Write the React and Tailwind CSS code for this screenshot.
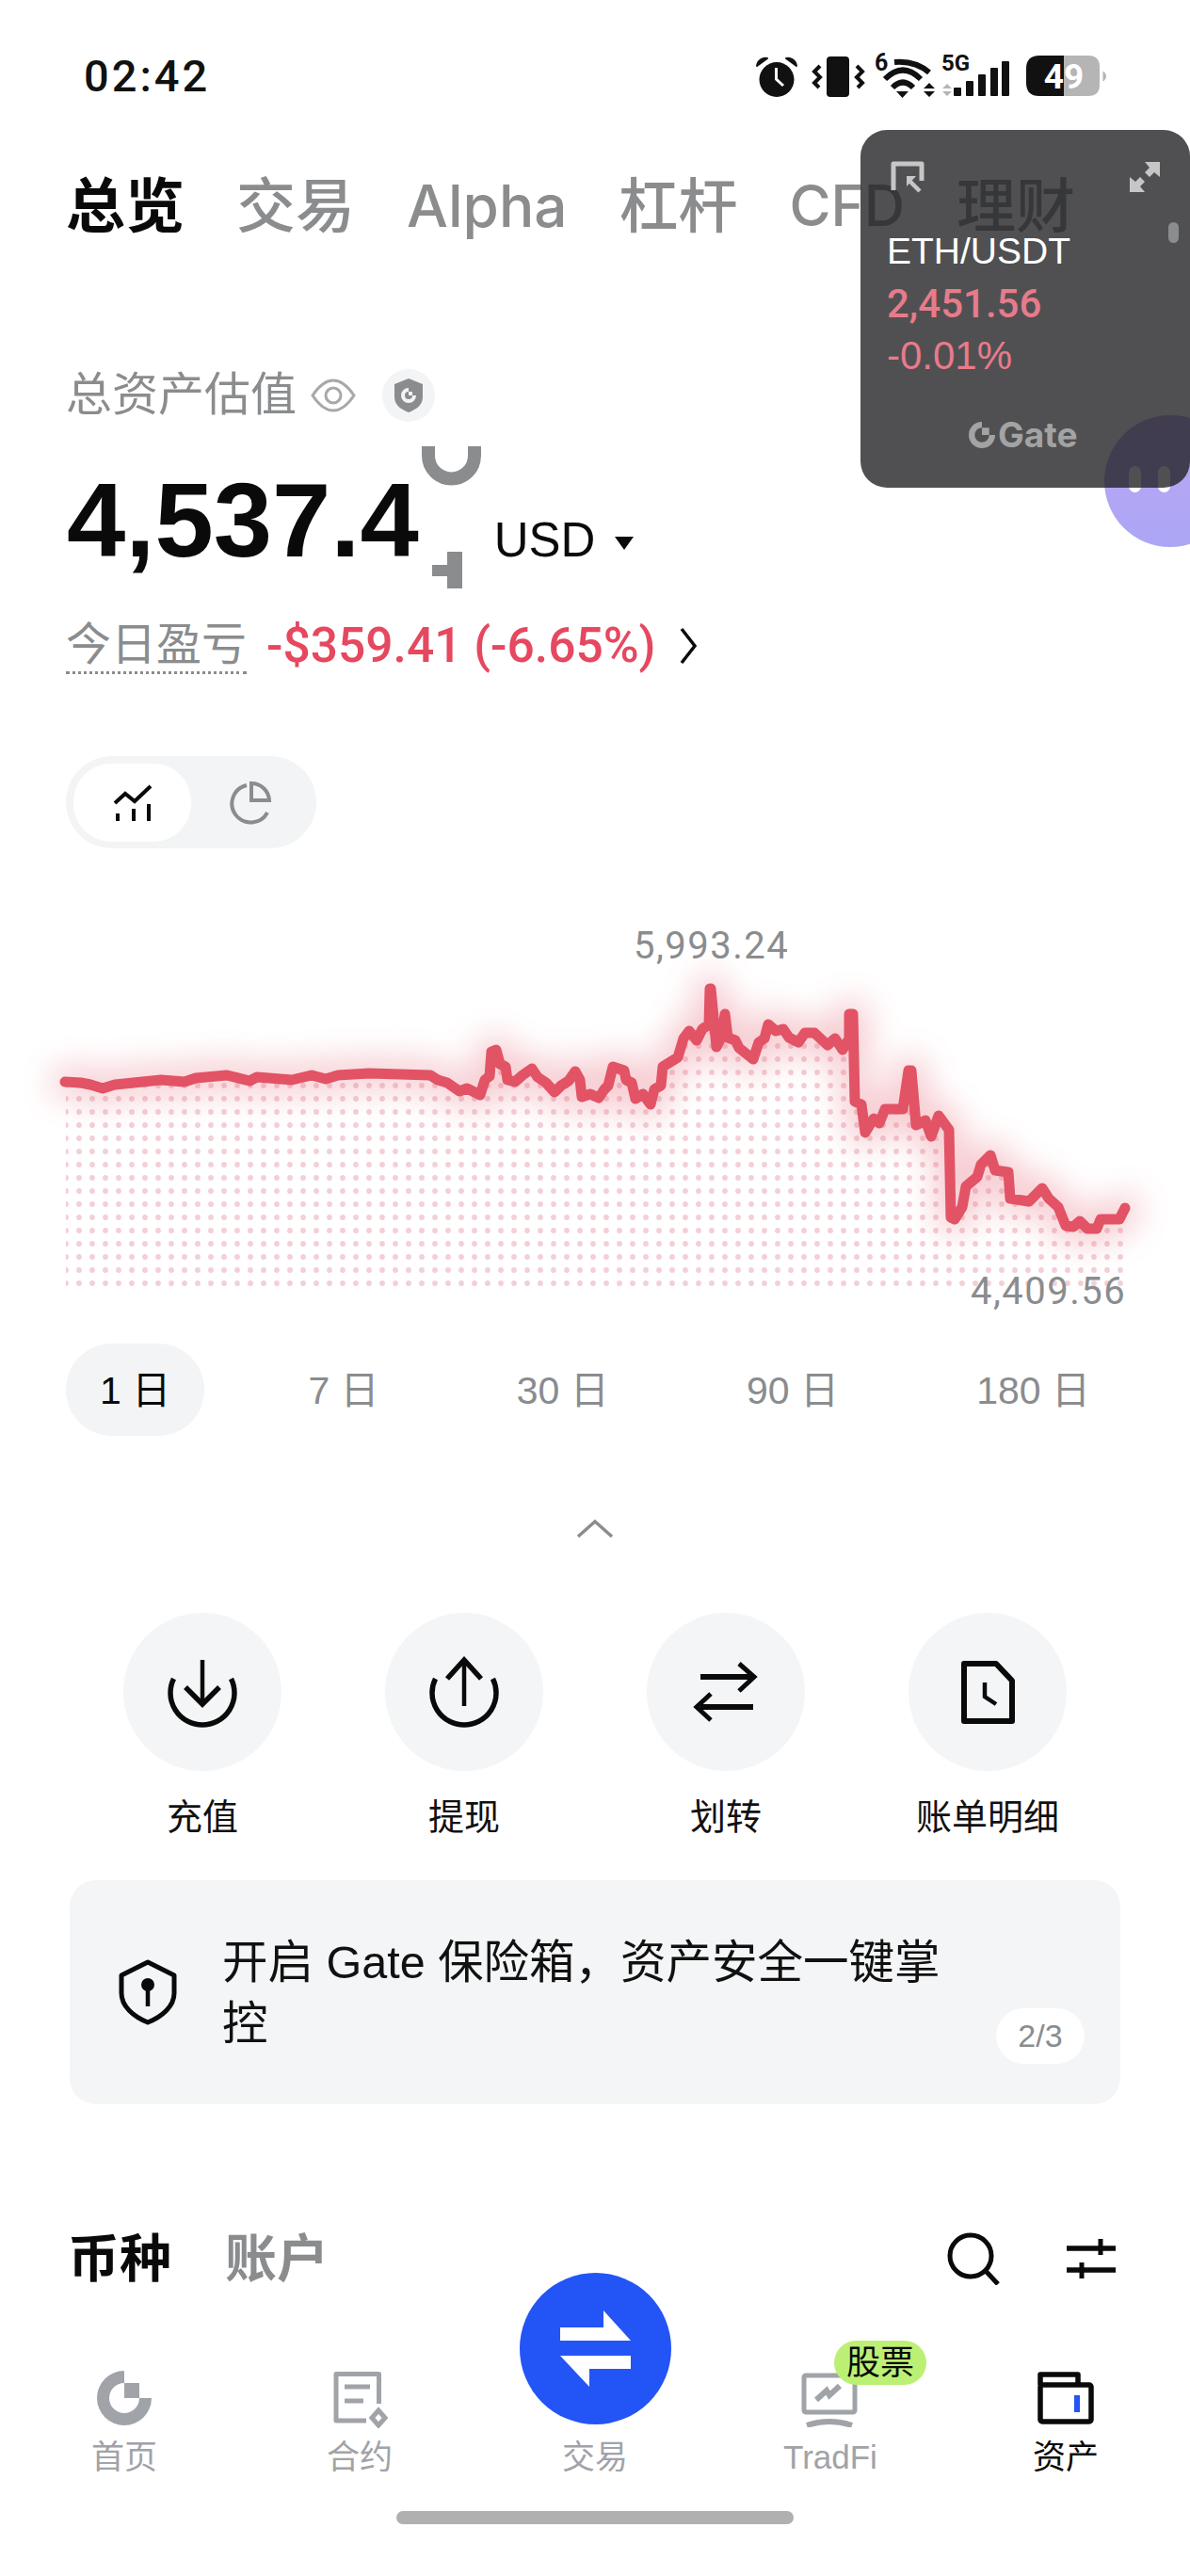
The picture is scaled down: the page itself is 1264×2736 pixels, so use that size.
const raw = [[69,1149],[86,1150],[96,1152],[109,1156],[122,1152],[171,1147],[196,1149],[208,1145],[241,1142],[265,1148],[273,1144],[310,1147],[331,1142],[346,1146],[359,1142],[392,1140],[457,1142],[465,1147],[475,1150],[488,1159],[496,1156],[510,1163],[515,1147],[520,1143],[522,1117],[527,1115],[531,1130],[537,1133],[539,1147],[547,1149],[555,1142],[565,1135],[571,1144],[580,1150],[589,1160],[596,1153],[604,1148],[611,1138],[616,1147],[618,1165],[627,1162],[636,1166],[642,1157],[646,1153],[651,1133],[663,1137],[665,1147],[671,1150],[675,1167],[683,1162],[691,1173],[695,1157],[702,1153],[704,1133],[720,1123],[726,1103],[732,1095],[740,1105],[746,1093],[753,1088],[754,1050],[755,1050],[761,1112],[767,1100],[770,1077],[773,1102],[781,1105],[785,1113],[800,1125],[806,1107],[812,1103],[816,1088],[824,1095],[832,1093],[838,1102],[848,1107],[855,1097],[865,1097],[879,1110],[887,1103],[895,1115],[902,1103],[902,1077],[906,1077],[908,1170],[915,1173],[919,1203],[928,1188],[934,1193],[940,1178],[959,1178],[965,1137],[968,1137],[973,1195],[983,1190],[989,1207],[997,1185],[1008,1200],[1010,1293],[1014,1295],[1022,1282],[1026,1260],[1038,1250],[1042,1237],[1052,1227],[1057,1243],[1071,1245],[1073,1273],[1093,1276],[1107,1262],[1114,1273],[1124,1282],[1132,1302],[1140,1303],[1147,1297],[1155,1305],[1165,1305],[1169,1295],[1189,1295],[1195,1283]];
const line = raw.map((p, i) => (i === 0 ? "M" : "L") + p[0] + " " + p[1]).join(" ");
const area = line + " L1197 1367 L70 1367 Z";

function StatusIcons() {
  return (
    <svg width="390" height="60" viewBox="0 0 390 60">
      <circle cx="30" cy="33.5" r="18.5" fill="#111" />
      <path d="M9 19 C10 13 15 10 20 11 Z" fill="#111" stroke="#111" strokeWidth="2" strokeLinejoin="round" />
      <path d="M51 19 C50 13 45 10 40 11 Z" fill="#111" stroke="#111" strokeWidth="2" strokeLinejoin="round" />
      <path d="M29.5 21 V33 L37 40" fill="none" stroke="#fff" strokeWidth="3" />
      <rect x="83" y="9" width="24" height="43" rx="4" fill="#111" />
      <path d="M76 19 L70 25 L76 31 L70 37 L75 42" fill="none" stroke="#111" strokeWidth="4" />
      <path d="M115 19 L121 25 L115 31 L121 37 L116 42" fill="none" stroke="#111" strokeWidth="4" />
      <text x="134" y="24" fontSize="25" fontWeight="700" fill="#111" fontFamily="Roboto, sans-serif">6</text>
      <path d="M155 15 Q177 13 192 26" fill="none" stroke="#111" strokeWidth="6" />
      <path d="M145 33 Q164 14 183 33" fill="none" stroke="#111" strokeWidth="6" />
      <path d="M153 42 Q164 31 175 42" fill="none" stroke="#111" strokeWidth="6" />
      <path d="M157 46 L170 46 L163.5 53 Z" fill="#111" />
      <path d="M186 43 L192 37 L198 43 Z M186 46 L198 46 L192 52 Z" fill="#111" />
      <text x="205" y="24" fontSize="24" fontWeight="700" fill="#111" fontFamily="Roboto, sans-serif">5G</text>
      <path d="M206 43 L211 38 L216 43 Z M206 46 L216 46 L211 51 Z" fill="#b5b5b5" />
      <rect x="218" y="42" width="8" height="9" rx="1" fill="#111" />
      <rect x="231" y="35" width="8" height="16" rx="1" fill="#111" />
      <rect x="244" y="28" width="8" height="23" rx="1" fill="#111" />
      <rect x="257" y="21" width="8" height="30" rx="1" fill="#111" />
      <rect x="269" y="14" width="8" height="37" rx="1" fill="#111" />
      <path d="M335 8 H309 Q295 8 295 22 V37 Q295 51 309 51 H335 Z" fill="#111" />
      <path d="M335 8 H361 Q373 8 373 20 V39 Q373 51 361 51 H335 Z" fill="#b5b5b5" />
      <path d="M377 25 Q382 30 377 35 Z" fill="#b5b5b5" stroke="#b5b5b5" strokeWidth="1" />
      <text x="335" y="43" textAnchor="middle" fontSize="37" fontWeight="700" fill="#fff" fontFamily="Roboto, sans-serif">49</text>
    </svg>
  );
}

function Gate({ className, color }) {
  return (
    <svg className={className} viewBox="0 0 58 58">
      <path d="M29 0 A29 29 0 1 0 58 29 H45 A16 16 0 1 1 29 13 Z" fill={color} />
      <rect x="29" y="13" width="16" height="16" fill={color} />
    </svg>
  );
}

function FloatWindow() {
  return (
    <div className="absolute left-[914px] top-[138px] z-20 flex h-[380px] w-[350px] flex-col rounded-[28px] bg-[#1f1f21]/78 pl-[28px] pr-[12px] pt-[32px]">
      <div className="flex items-start justify-between pr-[18px]">
        <svg width="40" height="36" viewBox="0 0 40 36" fill="none" stroke="#c6c6c6" className="ml-[2px]">
          <path d="M5 32 V4 H35 V22" strokeWidth="5" strokeLinejoin="round" />
          <path d="M33 33 L22 22" strokeWidth="4.5" />
          <path d="M19 17 H29 L19 28 Z" fill="#c6c6c6" stroke="none" />
        </svg>
        <svg width="36" height="36" viewBox="0 0 36 36" fill="#c6c6c6">
          <path d="M18 2 H34 V18 L28 13 L23 18 L18 13 L23 8 Z" />
          <path d="M18 34 H2 V18 L8 23 L13 18 L18 23 L13 28 Z" />
        </svg>
      </div>
      <div className="flex justify-end">
        <div className="mt-[30px] h-[22px] w-[11px] rounded-full bg-[#8b8c8d]" />
      </div>
      <div className="mt-[-14px] text-[39px] leading-[46px] text-white [font-family:'Liberation_Sans',sans-serif]">ETH/USDT</div>
      <div className="mt-[10px] text-[42px] font-medium leading-[46px] text-[#e87b8a] [font-family:Roboto,sans-serif]">2,451.56</div>
      <div className="mt-[9px] text-[42px] leading-[46px] text-[#e87b8a]">-0.01%</div>
      <div className="ml-[87px] mt-[46px] flex items-center gap-[3px]">
        <Gate className="h-[28px] w-[28px]" color="#a3a3a3" />
        <span className="text-[37px] font-bold leading-[30px] text-[#a3a3a3] [font-family:Inter,sans-serif]">Gate</span>
      </div>
    </div>
  );
}

function Bubble() {
  return (
    <div className="absolute left-[1173px] top-[441px] z-10 flex h-[140px] w-[140px] items-center gap-[18px] rounded-full bg-gradient-to-b from-[#bba7f2] to-[#aba6f6] pb-[4px] pl-[26px]">
      <div className="h-[28px] w-[13px] rounded-full bg-white" />
      <div className="h-[28px] w-[13px] rounded-full bg-white" />
    </div>
  );
}

function Chart() {
  return (
    <div className="relative mt-[59px] h-[440px] w-full">
      <svg width="1264" height="440" viewBox="0 960 1264 440">
        <defs>
          <pattern id="dots" patternUnits="userSpaceOnUse" x="77" y="1160" width="14" height="14">
            <circle cx="7" cy="7" r="2.9" fill="#f3cfd6" />
          </pattern>
          <filter id="glow" x="-10%" y="-40%" width="120%" height="180%">
            <feGaussianBlur stdDeviation="17" />
          </filter>
          <clipPath id="edge">
            <rect x="70" y="960" width="1130" height="410" />
          </clipPath>
        </defs>
        <g clipPath="url(#edge)">
          <path d={area} fill="url(#dots)" />
        </g>
        <path d={line} fill="none" stroke="#e25365" strokeWidth="32" strokeLinejoin="round" strokeLinecap="round" opacity="0.3" filter="url(#glow)" />
        <path d={line} fill="none" stroke="#e25365" strokeWidth="11" strokeLinejoin="round" strokeLinecap="round" />
      </svg>
      <span className="absolute left-[673px] top-[22px] text-[40px] leading-[46px] tracking-[1.5px] text-[#8a8c8e] [font-family:Roboto,sans-serif]">5,993.24</span>
      <span className="absolute left-[1031px] top-[389px] text-[40px] leading-[46px] tracking-[1.5px] text-[#8a8c8e] [font-family:Roboto,sans-serif]">4,409.56</span>
    </div>
  );
}

function Action({ label, children }) {
  return (
    <div className="flex flex-col items-center">
      <div className="flex h-[168px] w-[168px] items-center justify-center rounded-full bg-[#f4f5f6]">
        <svg width="84" height="84" viewBox="0 0 84 84" fill="none" stroke="#0a0a0a" strokeWidth="5">
          {children}
        </svg>
      </div>
      <div className="mt-[24px] text-[38px] leading-[50px] text-[#111]">{label}</div>
    </div>
  );
}

function NavItem({ label, active, icon, badge }) {
  return (
    <div className="relative flex w-[250px] flex-col items-center">
      <div className="flex h-[64px] items-center">{icon}</div>
      <div className={"mt-[8px] text-[35px] leading-[46px] " + (active ? "text-[#0a0a0a]" : "text-[#a0a3a8]")}>{label}</div>
      {badge}
    </div>
  );
}

export default function App() {
  return (
    <div className="relative h-[2736px] w-[1264px] overflow-hidden bg-white [font-family:'Liberation_Sans','Noto_Sans_CJK_SC',sans-serif]">
      <FloatWindow />
      <Bubble />

      <div className="flex h-[160px] items-start justify-between pl-[89px] pr-[79px] pt-[51px]">
        <span className="text-[47px] font-medium leading-[60px] tracking-[3px] text-[#111] [font-family:Roboto,sans-serif]">02:42</span>
        <StatusIcons />
      </div>

      <div className="ml-[70px] flex h-[116px] items-center gap-[55px] text-[63px] font-medium text-[#8a8c8e] [font-family:Inter,'Noto_Sans_CJK_SC',sans-serif]">
        <span className="font-bold text-[#0a0a0a]">总览</span>
        <span>交易</span>
        <span className="text-[62px]">Alpha</span>
        <span>杠杆</span>
        <span className="text-[60px]">CFD</span>
        <span>理财</span>
      </div>

      <div className="ml-[70px] mt-[116px] flex h-[56px] items-center text-[49px] text-[#8a8c8e]">
        <span>总资产估值</span>
        <svg width="48" height="36" viewBox="0 0 48 36" fill="none" stroke="#a6a8aa" strokeWidth="3" className="ml-[15px]">
          <path d="M2 18 C10 6 17 2 24 2 C31 2 38 6 46 18 C38 30 31 34 24 34 C17 34 10 30 2 18 Z" />
          <circle cx="24" cy="18" r="8" />
        </svg>
        <div className="ml-[28px] flex h-[56px] w-[56px] items-center justify-center rounded-full bg-[#f3f4f5]">
          <svg width="32" height="36" viewBox="0 0 32 36">
            <path d="M16 0 L31 6 V20 C31 28 24 33 16 36 C8 33 1 28 1 20 V6 Z" fill="#8a8c8e" />
            <path d="M16 10 A8 8 0 1 0 24 18 H20 A4 4 0 1 1 16 14 Z" fill="#f3f4f5" />
            <rect x="16" y="14" width="4" height="4" fill="#f3f4f5" />
          </svg>
        </div>
      </div>

      <div className="ml-[71px] mt-[26px] flex h-[152px] items-start">
        <span className="mt-[24px] text-[112px] font-bold leading-[110px] text-[#0a0a0a]">4,537.4</span>
        <svg width="63" height="152" viewBox="0 0 63 152" className="ml-[3px]" fill="#8a8c8e">
          <path d="M7 0 V10 A24.5 24.5 0 0 0 56 10 V0" fill="none" stroke="#8a8c8e" strokeWidth="14" />
          <rect x="27" y="112" width="16" height="39" />
          <rect x="11" y="126" width="16" height="12" />
        </svg>
        <span className="ml-[14px] mt-[72px] text-[51px] leading-[56px] text-[#0a0a0a]">USD</span>
        <svg width="20" height="14" viewBox="0 0 20 14" className="ml-[21px] mt-[96px]">
          <path d="M0 0 H20 L10 14 Z" fill="#0a0a0a" />
        </svg>
      </div>

      <div className="ml-[70px] mt-[30px] flex h-[60px] items-center">
        <span className="border-b-[3px] border-dotted border-[#8a8c8e] text-[48px] leading-[56px] text-[#8a8c8e]">今日盈亏</span>
        <span className="ml-[21px] text-[51.5px] font-medium leading-[56px] text-[#e5485f] [font-family:Roboto,sans-serif]">-$359.41 (-6.65%)</span>
        <svg width="20" height="40" viewBox="0 0 20 40" fill="none" stroke="#0a0a0a" strokeWidth="3.5" className="ml-[24px]">
          <path d="M3 2 L17 20 L3 38" />
        </svg>
      </div>

      <div className="ml-[70px] mt-[87px] flex h-[98px] w-[266px] items-center rounded-full bg-[#f3f4f5] pl-[8px]">
        <div className="flex h-[83px] w-[125px] items-center justify-center rounded-[40px] bg-white">
          <svg width="50" height="50" viewBox="0 0 50 50" fill="none" stroke="#0a0a0a" strokeWidth="4">
            <path d="M6 26 L17 16 L27 24 L44 8" />
            <path d="M9 37 V45 M26 32 V45 M42 27 V45" />
          </svg>
        </div>
        <svg width="52" height="52" viewBox="0 0 52 52" fill="none" stroke="#8a8c8e" strokeWidth="4" className="ml-[36px]">
          <path d="M23 8 A20 20 0 1 0 45 37" />
          <path d="M28 6 A19 19 0 0 1 47 24 H28 Z" />
        </svg>
      </div>

      <Chart />

      <div className="mx-[70px] mt-[27px] flex justify-between text-[41px] text-[#8a8c8e]">
        <div className="flex h-[98px] items-center rounded-full bg-[#f3f4f5] px-[36px] pt-[4px] text-[#0a0a0a]">1 日</div>
        <div className="flex h-[98px] items-center px-[36px] pt-[4px]">7 日</div>
        <div className="flex h-[98px] items-center px-[36px] pt-[4px]">30 日</div>
        <div className="flex h-[98px] items-center px-[36px] pt-[4px]">90 日</div>
        <div className="flex h-[98px] items-center px-[36px] pt-[4px]">180 日</div>
      </div>

      <div className="mt-[75px] flex h-[48px] items-center justify-center">
        <svg width="40" height="22" viewBox="0 0 40 22" fill="none" stroke="#8a8c8e" strokeWidth="3.5">
          <path d="M2 19 L20 3 L38 19" />
        </svg>
      </div>

      <div className="ml-[76px] mt-[65px] grid w-[1112px] grid-cols-4">
        <Action label="充值">
          <path d="M11.5 28 A34 34 0 1 0 72.5 28" strokeWidth="5.5" />
          <path d="M42 8 V54" strokeWidth="4.5" />
          <path d="M24 37 L42 55 L60 37" strokeWidth="5.5" />
        </Action>
        <Action label="提现">
          <path d="M11.5 28 A34 34 0 1 0 72.5 28" strokeWidth="5.5" />
          <path d="M42 10 V57" strokeWidth="4.5" />
          <path d="M24 28 L42 8 L60 28" strokeWidth="5.5" />
        </Action>
        <Action label="划转">
          <path d="M15 26 H71" strokeWidth="6" />
          <path d="M56 12 L72 26 L56 41" />
          <path d="M71 58 H15" strokeWidth="6" />
          <path d="M26 44 L11 58 L26 72" />
        </Action>
        <Action label="账单明细">
          <path d="M17 12 H51 L68 30 V73 H17 Z" strokeWidth="6" strokeLinejoin="round" />
          <path d="M39 32 V47 L51 55" strokeWidth="4.5" />
        </Action>
      </div>

      <div className="relative ml-[74px] mt-[42px] flex h-[238px] w-[1116px] items-start rounded-[28px] bg-[#f4f5f6] pl-[52px] pt-[84px]">
        <svg width="62" height="70" viewBox="0 0 62 70" fill="none" stroke="#0a0a0a" strokeWidth="5" className="shrink-0">
          <path d="M31 3 L59 17 V36 C59 50 46 61 31 67 C16 61 3 50 3 36 V17 Z" strokeLinejoin="round" />
          <circle cx="31" cy="27" r="7" fill="#0a0a0a" stroke="none" />
          <path d="M31 30 V50" strokeWidth="4.5" />
        </svg>
        <div className="ml-[48px] mt-[-29px] w-[775px] text-[48.5px] leading-[65px] text-[#111]">开启 Gate 保险箱，资产安全一键掌控</div>
        <div className="absolute right-[38px] top-[136px] flex h-[59px] w-[94px] items-center justify-center rounded-full bg-white text-[34px] text-[#8a8c8e]">2/3</div>
      </div>

      <div className="ml-[72px] mr-[78px] mt-[129px] flex h-[70px] items-center text-[55px] font-bold text-[#0a0a0a]">
        <span>币种</span>
        <span className="ml-[57px] font-semibold text-[#8a8c8e]">账户</span>
        <svg width="56" height="56" viewBox="0 0 56 56" fill="none" stroke="#0a0a0a" strokeWidth="5" className="ml-auto">
          <circle cx="25" cy="25" r="22" />
          <path d="M41 41 L54 55" />
        </svg>
        <svg width="54" height="44" viewBox="0 0 54 44" fill="none" stroke="#0a0a0a" className="ml-[70px]">
          <path d="M1 11 H53 M1 34 H53" strokeWidth="5.5" />
          <path d="M37 1 V18 M17 26 V43" strokeWidth="5" />
        </svg>
      </div>

      <div className="relative ml-[7px] mt-[81px] flex w-[1250px]">
        <NavItem label="首页" icon={<Gate className="h-[58px] w-[58px]" color="#a0a3a8" />} />
        <NavItem
          label="合约"
          icon={
            <svg width="64" height="64" viewBox="0 0 64 64" fill="none" stroke="#a0a3a8" strokeWidth="5">
              <path d="M39 56 H7 V6.5 H52.5 V38" strokeLinejoin="round" />
              <path d="M16 20 H43 M16 35 H36" />
              <path d="M52 45 L59 53 L52 61 L45 53 Z" strokeWidth="5" />
            </svg>
          }
        />
        <NavItem label="交易" icon={<div className="h-[64px]" />} />
        <NavItem
          label="TradFi"
          icon={
            <svg width="66" height="62" viewBox="0 0 66 62" fill="none" stroke="#a0a3a8" strokeWidth="5">
              <rect x="5" y="7" width="54" height="39" rx="2" />
              <path d="M8 60 Q32 52 56 60" strokeWidth="6" />
              <path d="M18 33 L29 23 L32 28 L43 18" strokeWidth="6" />
            </svg>
          }
          badge={
            <div className="absolute left-[129px] top-[-29px] flex h-[47px] w-[98px] items-center justify-center rounded-full bg-[#bcf074] text-[36px] leading-none text-[#0a0a0a]">股票</div>
          }
        />
        <NavItem
          label="资产"
          active
          icon={
            <svg width="64" height="64" viewBox="0 0 64 64" fill="none" stroke="#0a0a0a" strokeWidth="5.5">
              <path d="M5 18 V7 H45 V18" strokeLinejoin="round" />
              <rect x="5" y="18" width="54" height="39" rx="2" />
              <rect x="41" y="29" width="6" height="18" fill="#2354f5" stroke="none" />
            </svg>
          }
        />
        <div className="absolute left-[545px] top-[-101px] flex h-[161px] w-[161px] items-center justify-center rounded-full bg-[#2354f5]">
          <svg width="76" height="82" viewBox="0 0 76 82" fill="#fff">
            <path d="M0 18 H46 V0 L75 32 H0 Z" />
            <path d="M75 48 V62 H31 V81 L0 48 Z" />
          </svg>
        </div>
      </div>

      <div className="mx-auto mt-[34px] h-[14px] w-[422px] rounded-full bg-[#b0b0b0]" />
    </div>
  );
}
